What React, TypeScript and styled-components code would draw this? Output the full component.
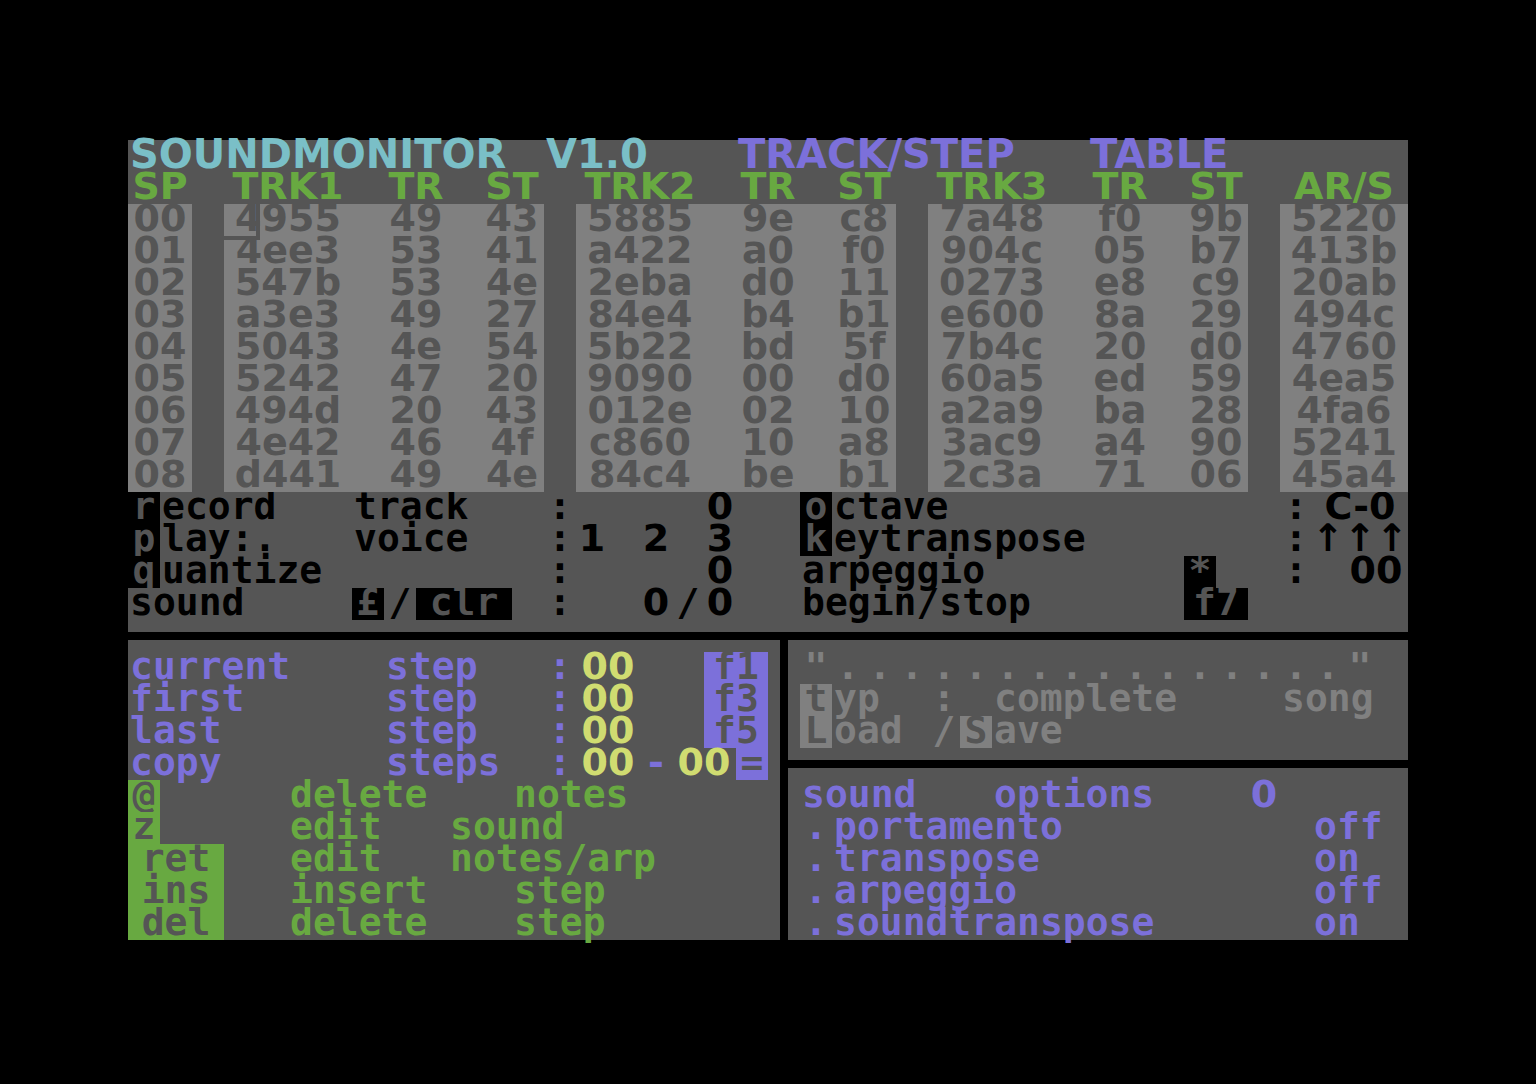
import React, { Fragment } from 'react';
import styled, { createGlobalStyle } from 'styled-components';

const ink = {
  black: '#000000',
  screen: '#555555',
  light: '#808080',
  green: '#68a941',
  purple: '#7c70da',
  cyan: '#7abfc7',
  yellow: '#d0dc71',
};

type Ink = keyof typeof ink;

const wide = "'DejaVu Sans', 'Liberation Sans', sans-serif";
const mono = "'DejaVu Sans Mono', 'Liberation Mono', monospace";

const GlobalStyle = createGlobalStyle`
  :root { --cell: calc(100vw / 48); }
  *, *::before, *::after { box-sizing: border-box; }
  body { margin: 0; background: ${ink.black}; }
`;

const Monitor = styled.main`
  display: flex;
  flex-direction: column;
  gap: 8px;
  min-height: 100vh;
  padding: 140px calc(var(--cell) * 4);
  background: ${ink.black};
  font-family: ${mono};
  font-size: 38px;
  font-weight: 700;
  line-height: 28px;
`;

const Panel = styled.section<{ $ink: Ink }>`
  background: ${ink.screen};
  color: ${(p) => ink[p.$ink]};
`;

const TopPanel = styled(Panel)`
  padding-bottom: 12px;
`;

const LowerArea = styled.div`
  display: grid;
  grid-template-columns: calc(var(--cell) * 20 + 12px) minmax(0, 1fr);
  gap: 8px;
`;

const StepPanel = styled(Panel)`
  padding-top: 12px;
`;

const SideColumn = styled.div`
  display: flex;
  flex-direction: column;
  gap: 8px;
`;

const FilePanel = styled(Panel)`
  padding: 12px 0 12px 12px;
`;

const OptionPanel = styled(Panel)`
  flex: 1;
  padding: 12px 0 0 12px;
`;

const Row = styled.div<{ $ink?: Ink }>`
  display: grid;
  grid-auto-columns: var(--cell);
  grid-template-rows: 32px;
  white-space: pre;
  ${(p) => p.$ink && `color: ${ink[p.$ink]};`}
`;

const TitleRow = styled(Row)`
  font-family: ${wide};
  font-size: 40px;
`;

interface Slot {
  $at: number;
  $span?: number;
  $ink?: Ink;
}

const Word = styled.span<Slot>`
  grid-row: 1;
  grid-column: ${(p) => p.$at + 1} / span ${(p) => p.$span ?? 1};
  padding: 0 0 4px 2px;
  ${(p) => p.$ink && `color: ${ink[p.$ink]};`}
`;

const Sign = styled(Word)`
  padding-left: 0;
  text-align: center;
`;

const Digit = styled(Sign)`
  font-family: ${wide};
`;

const Title = styled.h1<Slot>`
  grid-row: 1;
  grid-column: ${(p) => p.$at + 1} / span ${(p) => p.$span ?? 1};
  margin: 0;
  padding: 0 0 4px 2px;
  font: inherit;
  color: ${(p) => ink[p.$ink ?? 'cyan']};
`;

const Key = styled.button<Slot>`
  grid-row: 1;
  grid-column: ${(p) => p.$at + 1} / span ${(p) => p.$span ?? 1};
  padding: 0 0 4px;
  border: 0;
  background: ${(p) => ink[p.$ink ?? 'black']};
  color: ${ink.screen};
  font: inherit;
  text-align: center;
  cursor: pointer;
`;

const Toggle = styled.button<Slot>`
  grid-row: 1;
  grid-column: ${(p) => p.$at + 1} / span ${(p) => p.$span ?? 1};
  padding: 0 0 4px 2px;
  border: 0;
  background: none;
  color: inherit;
  font: inherit;
  text-align: left;
  cursor: pointer;
`;

const Field = styled.input<Slot>`
  grid-row: 1;
  grid-column: ${(p) => p.$at + 1} / span ${(p) => p.$span ?? 1};
  width: 100%;
  min-width: 0;
  height: 36px;
  margin: -4px 0 0;
  padding: 0;
  border: 0;
  outline: 0;
  background: none;
  color: ${(p) => (p.$ink ? ink[p.$ink] : 'inherit')};
  font: inherit;
  font-family: ${wide};
  text-align: center;
`;

const Halves = styled.div`
  display: grid;
  grid-template-columns: calc(var(--cell) * 21) minmax(0, 1fr);
`;

const StepTable = styled.table`
  width: 100%;
  table-layout: fixed;
  border-collapse: collapse;
  font-family: ${wide};
`;

const Col = styled.col<{ $cells: number }>`
  width: calc(var(--cell) * ${(p) => p.$cells});
`;

const Head = styled.th<{ $tail: number }>`
  height: 32px;
  padding: 0 calc(var(--cell) * ${(p) => p.$tail}) 4px 0;
  color: ${ink.green};
  text-align: center;
`;

const Data = styled.td<{ $tail: number }>`
  position: relative;
  height: 32px;
  padding: 0 calc(var(--cell) * ${(p) => p.$tail}) 4px 0;
  background: ${ink.light};
  color: ${ink.screen};
  text-align: center;
`;

const Gutter = styled.td`
  padding: 0;
`;

const Cursor = styled.i`
  position: absolute;
  top: 0;
  left: 0;
  z-index: 1;
  width: calc(var(--cell) + 4px);
  height: 36px;
  border: solid ${ink.screen};
  border-width: 0 4px 4px 0;
`;

interface Column {
  label: string;
  cells: number;
  tail: number;
  gutter?: boolean;
}

const track = (n: number): Column[] => [
  { label: `TRK${n}`, cells: 5, tail: 1 },
  { label: 'TR', cells: 3, tail: 1 },
  { label: 'ST', cells: 2, tail: 0, gutter: true },
];

const columns: Column[] = [
  { label: 'SP', cells: 2, tail: 0, gutter: true },
  ...track(1),
  ...track(2),
  ...track(3),
  { label: 'AR/S', cells: 4, tail: 0 },
];

const steps = [
  '00 4955 49 43 5885 9e c8 7a48 f0 9b 5220',
  '01 4ee3 53 41 a422 a0 f0 904c 05 b7 413b',
  '02 547b 53 4e 2eba d0 11 0273 e8 c9 20ab',
  '03 a3e3 49 27 84e4 b4 b1 e600 8a 29 494c',
  '04 5043 4e 54 5b22 bd 5f 7b4c 20 d0 4760',
  '05 5242 47 20 9090 00 d0 60a5 ed 59 4ea5',
  '06 494d 20 43 012e 02 10 a2a9 ba 28 4fa6',
  '07 4e42 46 4f c860 10 a8 3ac9 a4 90 5241',
  '08 d441 49 4e 84c4 be b1 2c3a 71 06 45a4',
].map((line) => line.split(' '));

const ranges = [
  { name: 'current', key: 'f1' },
  { name: 'first', key: 'f3' },
  { name: 'last', key: 'f5' },
];

const commands = [
  { key: '@', verb: 'delete', noun: 'notes', at: 12 },
  { key: 'z', verb: 'edit', noun: 'sound', at: 10 },
  { key: 'ret', verb: 'edit', noun: 'notes/arp', at: 10 },
  { key: 'ins', verb: 'insert', noun: 'step', at: 12 },
  { key: 'del', verb: 'delete', noun: 'step', at: 12 },
];

const options = [
  { name: 'portamento', on: false },
  { name: 'transpose', on: true },
  { name: 'arpeggio', on: false },
  { name: 'soundtranspose', on: true },
];

const nameSlots = Array.from({ length: 16 }, (_, i) => i);

function Steps() {
  return (
    <StepTable>
      <colgroup>
        {columns.map((c, i) => (
          <Fragment key={i}>
            <Col $cells={c.cells} />
            {c.gutter && <Col $cells={1} />}
          </Fragment>
        ))}
      </colgroup>
      <thead>
        <tr>
          {columns.map((c, i) => (
            <Fragment key={i}>
              <Head scope="col" $tail={c.tail}>{c.label}</Head>
              {c.gutter && <Gutter />}
            </Fragment>
          ))}
        </tr>
      </thead>
      <tbody>
        {steps.map((cells, row) => (
          <tr key={row}>
            {columns.map((c, i) => (
              <Fragment key={i}>
                <Data $tail={c.tail}>
                  {cells[i]}
                  {row === 0 && i === 1 && <Cursor />}
                </Data>
                {c.gutter && <Gutter />}
              </Fragment>
            ))}
          </tr>
        ))}
      </tbody>
    </StepTable>
  );
}

function Transport() {
  return (
    <Halves>
      <div>
        <Row>
          <Key $at={0}>r</Key>
          <Word $at={1} $span={5}>ecord</Word>
          <Word $at={7} $span={5}>track</Word>
          <Sign $at={13}>:</Sign>
          <Field $at={18} aria-label="record track" defaultValue="0" />
        </Row>
        <Row>
          <Key $at={0}>p</Key>
          <Word $at={1} $span={5}>lay:.</Word>
          <Word $at={7} $span={5}>voice</Word>
          <Sign $at={13}>:</Sign>
          <Digit $at={14}>1</Digit>
          <Digit $at={16}>2</Digit>
          <Digit $at={18}>3</Digit>
        </Row>
        <Row>
          <Key $at={0}>q</Key>
          <Word $at={1} $span={8}>uantize</Word>
          <Sign $at={13}>:</Sign>
          <Field $at={18} aria-label="quantize" defaultValue="0" />
        </Row>
        <Row>
          <Word $at={0} $span={6}>sound</Word>
          <Key $at={7}>£</Key>
          <Sign $at={8}>/</Sign>
          <Key $at={9} $span={3}>clr</Key>
          <Sign $at={13}>:</Sign>
          <Field $at={16} aria-label="sound" defaultValue="0" />
          <Sign $at={17}>/</Sign>
          <Field $at={18} aria-label="sound bank" defaultValue="0" />
        </Row>
      </div>
      <div>
        <Row>
          <Key $at={0}>o</Key>
          <Word $at={1} $span={6}>ctave</Word>
          <Sign $at={15}>:</Sign>
          <Field $at={16} $span={3} aria-label="octave" defaultValue="C-0" />
        </Row>
        <Row>
          <Key $at={0}>k</Key>
          <Word $at={1} $span={11}>eytranspose</Word>
          <Sign $at={15}>:</Sign>
          <Digit $at={16}>↑</Digit>
          <Digit $at={17}>↑</Digit>
          <Digit $at={18}>↑</Digit>
        </Row>
        <Row>
          <Word $at={0} $span={9}>arpeggio</Word>
          <Key $at={12}>*</Key>
          <Sign $at={15}>:</Sign>
          <Field $at={17} $span={2} aria-label="arpeggio" defaultValue="00" />
        </Row>
        <Row>
          <Word $at={0} $span={11}>begin/stop</Word>
          <Key $at={12} $span={2}>f7</Key>
        </Row>
      </div>
    </Halves>
  );
}

export default function App() {
  return (
    <>
      <GlobalStyle />
      <Monitor>
        <TopPanel $ink="black">
          <TitleRow>
            <Title $at={0} $span={12}>SOUNDMONITOR</Title>
            <Word $at={13} $span={5} $ink="cyan">V1.0</Word>
            <Word $at={19} $span={10} $ink="purple">TRACK/STEP</Word>
            <Word $at={30} $span={5} $ink="purple">TABLE</Word>
          </TitleRow>
          <Steps />
          <Transport />
        </TopPanel>

        <LowerArea>
          <StepPanel $ink="purple">
            {ranges.map((r) => (
              <Row key={r.name}>
                <Word as="label" htmlFor={r.name} $at={0} $span={7}>{r.name}</Word>
                <Word $at={8} $span={5}>step</Word>
                <Sign $at={13}>:</Sign>
                <Field id={r.name} $at={14} $span={2} $ink="yellow" defaultValue="00" />
                <Key $at={18} $span={2} $ink="purple">{r.key}</Key>
              </Row>
            ))}
            <Row>
              <Word $at={0} $span={7}>copy</Word>
              <Word $at={8} $span={5}>steps</Word>
              <Sign $at={13}>:</Sign>
              <Field $at={14} $span={2} $ink="yellow" aria-label="copy from step" defaultValue="00" />
              <Sign $at={16}>-</Sign>
              <Field $at={17} $span={2} $ink="yellow" aria-label="copy to step" defaultValue="00" />
              <Key $at={19} $ink="purple">=</Key>
            </Row>
            {commands.map((c) => (
              <Row key={c.key} $ink="green">
                <Key $at={0} $span={c.key.length} $ink="green">{c.key}</Key>
                <Word $at={5} $span={c.at - 5}>{c.verb}</Word>
                <Word $at={c.at} $span={20 - c.at}>{c.noun}</Word>
              </Row>
            ))}
          </StepPanel>

          <SideColumn>
            <FilePanel $ink="light">
              <Row>
                <Sign $at={0}>"</Sign>
                {nameSlots.map((i) => (
                  <Sign key={i} $at={i + 1}>.</Sign>
                ))}
                <Sign $at={17}>"</Sign>
              </Row>
              <Row>
                <Key $at={0} $ink="light">t</Key>
                <Word $at={1} $span={3}>yp</Word>
                <Sign $at={4}>:</Sign>
                <Word $at={6} $span={8}>complete</Word>
                <Word $at={15} $span={4}>song</Word>
              </Row>
              <Row>
                <Key $at={0} $ink="light">L</Key>
                <Word $at={1} $span={3}>oad</Word>
                <Sign $at={4}>/</Sign>
                <Key $at={5} $ink="light">S</Key>
                <Word $at={6} $span={4}>ave</Word>
              </Row>
            </FilePanel>

            <OptionPanel $ink="purple">
              <Row>
                <Word $at={0} $span={5}>sound</Word>
                <Word $at={6} $span={7}>options</Word>
                <Digit $at={14}>0</Digit>
              </Row>
              {options.map((o) => (
                <Row key={o.name}>
                  <Sign $at={0}>.</Sign>
                  <Word $at={1} $span={14}>{o.name}</Word>
                  <Toggle $at={16} $span={3} aria-label={o.name} aria-pressed={o.on}>
                    {o.on ? 'on' : 'off'}
                  </Toggle>
                </Row>
              ))}
            </OptionPanel>
          </SideColumn>
        </LowerArea>
      </Monitor>
    </>
  );
}
